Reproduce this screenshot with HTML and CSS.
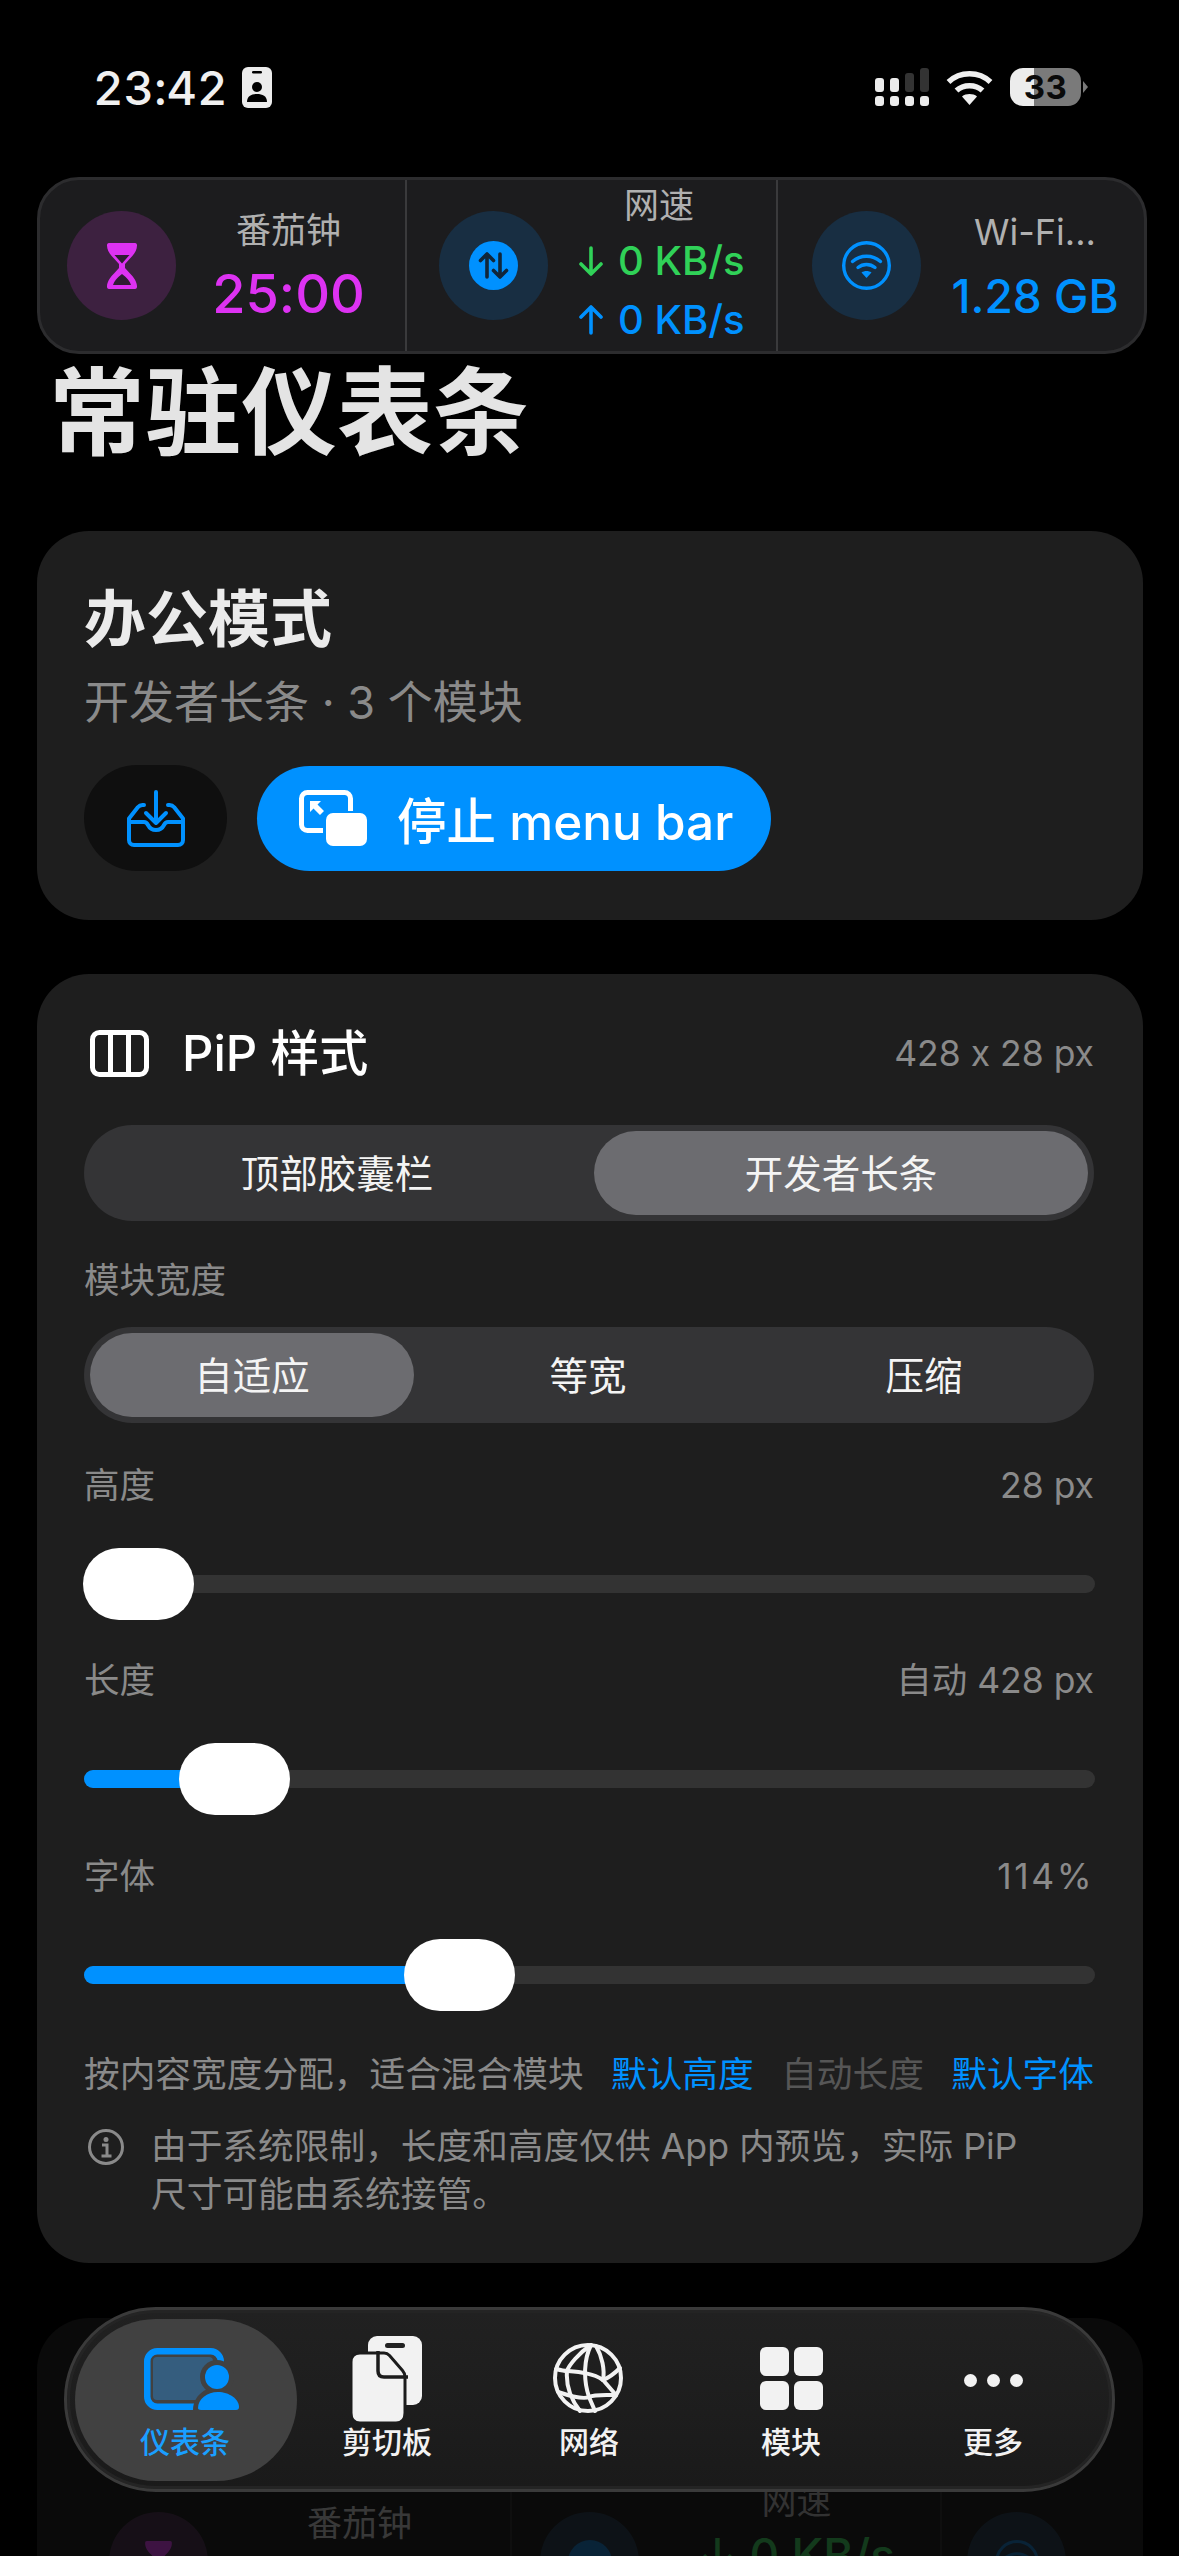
FILE: index.html
```html
<!DOCTYPE html>
<html lang="zh-CN">
<head>
<meta charset="utf-8">
<title>常驻仪表条</title>
<link rel="stylesheet" href="styles.css">
</head>
<body>
<div class="page">
  <header class="status">
    <div class="status-left">
      <span class="clock">23:42</span>
      <svg class="badge" viewBox="0 0 30 41"><rect width="30" height="41" rx="6" fill="#ececec"/><rect x="10" y="4" width="10" height="2.6" rx="1.3" fill="#000"/><circle cx="15" cy="20" r="5" fill="#000"/><path d="M5 35c0-6 4.500-8 10-8s10 2 10 8z" fill="#000"/></svg>
    </div>
    <div class="status-right">
      <svg class="signal" viewBox="0 0 55 38">
        <g fill="#ececec"><rect x="0" y="10" width="9" height="14" rx="3"/><rect x="15" y="10" width="9" height="14" rx="3"/><rect x="0" y="28" width="9" height="10" rx="3"/><rect x="15" y="28" width="9" height="10" rx="3"/><rect x="30" y="28" width="9" height="10" rx="3"/><rect x="45" y="28" width="9" height="10" rx="3"/></g>
        <g fill="#333"><rect x="30" y="5" width="9" height="19" rx="3"/><rect x="45" y="0" width="9" height="24" rx="3"/></g>
      </svg>
      <svg class="wifi" viewBox="0 0 47 36"><g fill="none" stroke="#f0f0f0" stroke-width="5.500"><path d="M2.500 13C14 2 33 2 44.500 13"/><path d="M10.500 21.500C17.500 15 29.500 15 36.500 21.500"/></g><path d="M16 27.500c4-3.200 11-3.200 15 0l-7.500 8.500z" fill="#f0f0f0"/></svg>
      <div class="battery">
        <div class="battery-body"><span class="battery-text">33</span></div>
        <div class="battery-nib"></div>
      </div>
    </div>
  </header>

  <section class="strip">
    <div class="cell cell-a">
      <div class="dot dot-purple">
        <svg class="ico-hourglass" viewBox="0 0 30 46"><path d="M2 0h26c1.500 0 2 1 2 2.500 0 5-3 9-7 13l-5 5.500v4l5 5.500c4 4 7 8.500 7 13 0 1.500-.5 2.500-2 2.500H2c-1.500 0-2-1-2-2.500 0-4.500 3-9 7-13l5-5.500v-4l-5-5.500C3 11.500 0 7.500 0 2.500 0 1 .5 0 2 0z" fill="#dd32f2"/><path d="M7.500 12h15L15 20.500zM6 42c1-4 4-7 9-11 5 4 8 7 9 11z" fill="#2f1b33"/></svg>
      </div>
      <div class="info">
        <div class="info-title">番茄钟</div>
        <div class="info-value purple">25:00</div>
      </div>
    </div>
    <div class="cell cell-b">
      <div class="dot dot-blue">
        <svg class="ico-net" viewBox="0 0 49 49"><circle cx="24.500" cy="24.500" r="24.500" fill="#0091ff"/><g fill="none" stroke="#10263a" stroke-width="3.600" stroke-linecap="round" stroke-linejoin="round"><path d="M18 36V13M11.500 19.500 18 13l6.500 6.500"/><path d="M31 13v23M24.500 29.500 31 36l6.500-6.500"/></g></svg>
      </div>
      <div class="info info-net">
        <div class="info-title">网速</div>
        <div class="rate green"><svg class="arrow" viewBox="0 0 26 30"><path d="M13 2v26M3 18l10 10 10-10" fill="none" stroke="currentColor" stroke-width="3.600" stroke-linecap="round" stroke-linejoin="round"/></svg><span>0 KB/s</span></div>
        <div class="rate blue"><svg class="arrow" viewBox="0 0 26 30"><path d="M13 28V2M3 12 13 2l10 10" fill="none" stroke="currentColor" stroke-width="3.600" stroke-linecap="round" stroke-linejoin="round"/></svg><span>0 KB/s</span></div>
      </div>
    </div>
    <div class="cell cell-c">
      <div class="dot dot-blue">
        <svg class="ico-net" viewBox="0 0 49 49"><circle cx="24.500" cy="24.500" r="22.800" fill="none" stroke="#0091ff" stroke-width="3.400"/><g fill="none" stroke="#0091ff" stroke-width="3.400" stroke-linecap="round"><path d="M10.500 20.500c8-7 20-7 28 0"/><path d="M16 26.500c5-4 12-4 17 0"/></g><path d="M19.500 31.500c3-2 7-2 10 0l-5 5.500z" fill="#0091ff"/></svg>
      </div>
      <div class="info">
        <div class="info-title">Wi-Fi...</div>
        <div class="info-value blue">1.28 GB</div>
      </div>
    </div>
  </section>

  <h1 class="page-title">常驻仪表条</h1>

  <section class="card card-mode">
    <h2 class="mode-title">办公模式</h2>
    <p class="mode-sub">开发者长条 · 3 个模块</p>
    <div class="mode-actions">
      <button class="icon-btn">
        <svg class="ico-inbox" viewBox="0 0 58 57"><g fill="none" stroke="#0091ff" stroke-width="4" stroke-linecap="round" stroke-linejoin="round"><path d="M29 2v31M19 23l10 10 10-10"/><path d="M17 15h-1.500c-2 0-3.500.8-4.700 2.200L2 28.500V50c0 3 2 5 5 5h44c3 0 5-2 5-5V28.500l-8.800-11.300C46 15.800 44.500 15 42.500 15H41"/><path d="M2 32h15c2 0 3 1 4 3 1.500 3 4 5 8 5s6.500-2 8-5c1-2 2-3 4-3h15"/></g></svg>
      </button>
      <button class="stop-btn">
        <svg class="ico-pip" viewBox="0 0 68 56"><rect x="2.500" y="2.500" width="49" height="38" rx="6" fill="none" stroke="#fff" stroke-width="5"/><rect x="24" y="21" width="44" height="35" rx="8" fill="#0091ff"/><rect x="27" y="23" width="41" height="33" rx="7" fill="#fff"/><path d="M11 11h11l-3.500 3.500L25 21l-4 4-6.500-6.500L11 22z" fill="#fff"/></svg>
        <span>停止 menu bar</span>
      </button>
    </div>
  </section>

  <section class="card card-pip">
    <div class="pip-head">
      <div class="pip-head-left">
        <svg class="ico-cols" viewBox="0 0 59 47"><g fill="none" stroke="#fff" stroke-width="5"><rect x="2.500" y="2.500" width="54" height="42" rx="7"/><path d="M20.500 3v41M38.500 3v41"/></g></svg>
        <h3 class="pip-title">PiP 样式</h3>
      </div>
      <span class="muted size-text">428 x 28 px</span>
    </div>

    <div class="segment seg-two">
      <div class="seg-item">顶部胶囊栏</div>
      <div class="seg-item on">开发者长条</div>
    </div>

    <div class="field-label first-label muted">模块宽度</div>
    <div class="segment seg-three">
      <div class="seg-item on">自适应</div>
      <div class="seg-item">等宽</div>
      <div class="seg-item">压缩</div>
    </div>

    <div class="slider-head muted high"><span>高度</span><span>28 px</span></div>
    <div class="track"><div class="fill" style="width:55px"><div class="thumb"></div></div></div>

    <div class="slider-head muted"><span>长度</span><span>自动 428 px</span></div>
    <div class="track"><div class="fill" style="width:151px"><div class="thumb"></div></div></div>

    <div class="slider-head muted"><span>字体</span><span class="pct">114%</span></div>
    <div class="track"><div class="fill" style="width:376px"><div class="thumb"></div></div></div>

    <div class="hints">
      <span class="muted">按内容宽度分配，适合混合模块</span>
      <span class="link">默认高度</span>
      <span class="dim">自动长度</span>
      <span class="link">默认字体</span>
    </div>
    <div class="note muted">
      <svg class="ico-info" viewBox="0 0 38 38"><circle cx="19" cy="19" r="16.500" fill="none" stroke="#8a8a8a" stroke-width="3"/><circle cx="19" cy="11.500" r="2.500" fill="#8a8a8a"/><path d="M15 17h5v11M14.500 28h10" fill="none" stroke="#8a8a8a" stroke-width="3"/></svg>
      <p class="note-text">由于系统限制，长度和高度仅供 App 内预览，实际 PiP<br>尺寸可能由系统接管。</p>
    </div>
  </section>

  <section class="card card-ghost">
    <div class="ghost-row">
      <div class="ghost-cell ghost-a">
        <div class="dot ghost-dot g-purple">
          <svg class="ghost-ico-h" viewBox="0 0 30 46"><path d="M2 0h26c1.500 0 2 1 2 2.500 0 5-3 9-7 13l-5 5.500v4l5 5.500c4 4 7 8.500 7 13 0 1.500-.5 2.500-2 2.500H2c-1.500 0-2-1-2-2.500 0-4.500 3-9 7-13l5-5.500v-4l-5-5.500C3 11.500 0 7.500 0 2.500 0 1 .5 0 2 0z" fill="#dd32f2"/></svg>
        </div>
        <div class="info-title">番茄钟</div>
      </div>
      <div class="ghost-cell ghost-b">
        <div class="dot ghost-dot g-blue">
          <svg class="ghost-ico-n" viewBox="0 0 49 49"><circle cx="24.500" cy="24.500" r="24.500" fill="#0091ff"/></svg>
        </div>
        <div class="info ghost-info">
          <div class="info-title">网速</div>
          <div class="ghost-rate">↓ 0 KB/s</div>
        </div>
      </div>
      <div class="ghost-cell ghost-c">
        <div class="dot ghost-dot g-blue">
          <svg class="ghost-ico-n" viewBox="0 0 49 49"><circle cx="24.500" cy="24.500" r="22.800" fill="none" stroke="#0091ff" stroke-width="3.400"/><path d="M10.500 20.500c8-7 20-7 28 0M16 26.500c5-4 12-4 17 0" fill="none" stroke="#0091ff" stroke-width="3.400"/></svg>
        </div>
      </div>
    </div>
  </section>

  <nav class="tabbar">
    <div class="tab active">
      <div class="tab-pill"></div>
      <svg class="tab-ico" viewBox="0 0 96 62"><rect x="3.250" y="3.250" width="73.500" height="55.500" rx="10" fill="none" stroke="#0091ff" stroke-width="6.500"/><rect x="9" y="9" width="60" height="43" rx="4" fill="#355d7e"/><circle cx="73" cy="29" r="17" fill="#414141"/><path d="M49 62c0-13 11-23 25-23s22 10 22 23z" fill="#414141"/><circle cx="73" cy="29" r="12" fill="#0091ff"/><path d="M54 60c0-9 9-16 20-16s21 7 21 15c0 2-1 3-3 3H57c-2 0-3-1-3-2z" fill="#0091ff"/></svg>
      <span class="tab-label">仪表条</span>
    </div>
    <div class="tab">
      <svg class="tab-ico" viewBox="0 0 72 87"><rect x="17" y="0" width="54" height="69" rx="9" fill="#f2f2f2"/><rect x="34" y="7" width="20" height="5" rx="2.500" fill="#222"/><path d="M9 17h24c2.500 0 4 .8 5.500 2.500l13 15c1.500 1.800 2.500 3.500 2.500 6V77c0 6-3 10-9 10H9c-6 0-9-4-9-10V26c0-6 3-9 9-9z" fill="#f2f2f2" stroke="#1c1c1c" stroke-width="3"/><path d="M27 15v20c0 4 2 6 6 6h24" fill="none" stroke="#1c1c1c" stroke-width="3.500"/></svg>
      <span class="tab-label">剪切板</span>
    </div>
    <div class="tab">
      <svg class="tab-ico" viewBox="0 0 70 70"><g fill="none" stroke="#f2f2f2" stroke-width="4" stroke-linecap="round"><circle cx="35" cy="35" r="33"/><path d="M38 2C26 10 16 22 14 28c-1 12 2 26 13 40"/><path d="M38 2c-7 14-8 34-2 52l6 14"/><path d="M43 3c6 10 9 24 7 34l13 15"/><path d="M3 26c4 1 9 2 11 2 12 1 26 2 36 9"/><path d="M50 37c5-2 12-7 17-12"/><path d="M5 49c9 3 25 8 31 5s18-2 27-2"/></g></svg>
      <span class="tab-label">网络</span>
    </div>
    <div class="tab">
      <div class="tab-grid"><i></i><i></i><i></i><i></i></div>
      <span class="tab-label">模块</span>
    </div>
    <div class="tab">
      <div class="tab-dots"><i></i><i></i><i></i></div>
      <span class="tab-label">更多</span>
    </div>
  </nav>
</div>
</body>
</html>
```

FILE: styles.css
```css
* { box-sizing: border-box; }
html, body { margin: 0; padding: 0; background: #000; }
body { font-family: Inter, "Noto Sans CJK SC", sans-serif; color: #fff; font-feature-settings: "calt" 0; }
h1, h2, h3, p { margin: 0; font: inherit; }
button { border: 0; padding: 0; font: inherit; color: inherit; }
.page { position: relative; width: 1179px; height: 2556px; overflow: hidden; background: #000; }

.status { height: 177px; display: flex; justify-content: space-between; align-items: flex-start; padding: 67px 91px 0 93px; }
.status-left { display: flex; align-items: center; gap: 15px; height: 41px; }
.clock { font-size: 47px; font-weight: 500; line-height: 41px; color: #f0f0f0; font-variant-numeric: tabular-nums; }
.badge { width: 30px; height: 41px; display: block; }
.status-right { display: flex; align-items: center; height: 38px; margin-top: 1px; }
.signal { width: 55px; height: 38px; display: block; margin-right: 16px; }
.wifi { width: 47px; height: 36px; display: block; margin-right: 17px; }
.battery { display: flex; align-items: center; }
.battery-body { width: 71px; height: 38px; border-radius: 13px; background: linear-gradient(90deg, #ececec 24px, #7a7a7a 24px); display: flex; align-items: center; justify-content: center; }
.battery-text { color: #0a0a0a; font-size: 33px; font-weight: 700; line-height: 34px; letter-spacing: .5px; }
.battery-nib { width: 5px; height: 12px; margin-left: 2px; background: #7a7a7a; clip-path: polygon(0 0, 100% 50%, 0 100%); }

.strip { width: 1110px; height: 177px; margin-left: 37px; display: grid; grid-template-columns: 366px 371px 1fr; background: #1c1c1e; border: 3px solid #2c2c2e; border-radius: 42px; overflow: hidden; }
.cell { display: flex; align-items: center; margin-top: -3px; height: 177px; }
.cell + .cell { border-left: 2px solid #3a3a3c; }
.cell-a { padding-left: 27px; }
.cell-b { padding-left: 32px; margin-left: -1px; }
.cell-c { padding-left: 34px; margin-left: -1px; }
.dot { width: 109px; height: 109px; border-radius: 50%; flex: none; display: flex; align-items: center; justify-content: center; }
.dot-purple { background: #3d2140; }
.dot-blue { background: #182e42; }
.ico-hourglass { width: 30px; height: 46px; display: block; }
.ico-net { width: 49px; height: 49px; display: block; }
.info { flex: 1; display: flex; flex-direction: column; align-items: center; gap: 10px; padding-right: 5px; }
.info-title { font-size: 35px; line-height: 46px; color: #b0b0b0; }
.info-value { font-size: 54px; font-weight: 500; line-height: 62px; white-space: nowrap; }
.cell-c .info-title { font-size: 36px; }
.cell-c .info-value { font-size: 46px; line-height: 52px; margin-top: 2px; }
.cell-c .info { padding-right: 0; gap: 13px; padding-left: 5px; }
.purple { color: #dd32f2; }
.blue { color: #0091ff; }
.green { color: #30d158; }
.info-net { gap: 0; padding-right: 0; padding-left: 30px; align-items: flex-start; margin-top: 1px; }
.info-net .info-title { padding-left: 46px; line-height: 44px; margin-bottom: 5px; }
.rate { display: flex; align-items: center; gap: 14px; height: 59px; font-size: 40px; font-weight: 500; white-space: nowrap; line-height: 50px; }
.arrow { width: 26px; height: 30px; display: block; }

.page-title { margin: 6px 0 0 49px; font-size: 96px; line-height: 104px; font-weight: 700; color: #e4e4e4; }

.card { width: 1106px; margin-left: 37px; background: #1e1e1e; border-radius: 52px; }
.card-mode { height: 389px; margin-top: 67px; padding: 53px 47px 0; }
.mode-title { font-size: 62px; line-height: 72px; font-weight: 700; color: #ebebeb; }
.mode-sub { font-size: 45px; line-height: 58px; color: #8a8a8a; margin-top: 18px; }
.mode-actions { display: flex; align-items: center; gap: 30px; margin-top: 33px; }
.icon-btn { width: 143px; height: 106px; border-radius: 53px; background: #0f0f0f; display: flex; align-items: center; justify-content: center; }
.ico-inbox { width: 58px; height: 57px; display: block; }
.stop-btn { height: 105px; width: 514px; border-radius: 53px; background: #0091ff; display: flex; align-items: center; gap: 30px; padding-left: 42px; font-size: 49.500px; font-weight: 500; color: #fff; white-space: nowrap; }
.ico-pip { width: 68px; height: 56px; display: block; }

.card-pip { height: 1289px; margin-top: 54px; padding: 56px 47px 0; }
.pip-head { display: flex; justify-content: space-between; align-items: center; height: 47px; padding: 0 2px 0 6px; }
.pip-head-left { display: flex; align-items: center; gap: 33px; }
.ico-cols { width: 59px; height: 47px; display: block; }
.pip-title { font-size: 49px; font-weight: 500; line-height: 47px; color: #fff; }
.muted { color: #8a8a8a; }
.size-text { font-size: 35.500px; line-height: 47px; }
.segment { width: 1010px; height: 96px; padding: 6px; border-radius: 48px; background: #343436; display: grid; }
.seg-two { grid-template-columns: 494px 494px; column-gap: 10px; margin-top: 48px; }
.seg-three { grid-template-columns: repeat(3, 324px); column-gap: 12px; }
.seg-item { display: flex; align-items: center; justify-content: center; padding-bottom: 4px; border-radius: 42px; font-size: 38.500px; color: #f4f4f4; }
.seg-item.on { background: #6c6c70; }
.field-label { font-size: 35.500px; line-height: 48px; }
.first-label { margin-top: 36px; margin-bottom: 22px; }
.slider-head { display: flex; justify-content: space-between; padding-right: 2px; font-size: 35.500px; line-height: 48px; margin-top: 64.500px; }
.slider-head.high { margin-top: 38.500px; }
.pct { letter-spacing: 2.500px; }
.track { position: relative; width: 1011px; height: 18px; margin-top: 65px; border-radius: 9px; background: #333; }
.fill { position: relative; height: 18px; border-radius: 9px; background: #0091ff; }
.thumb { position: absolute; right: -55px; top: -27px; width: 111px; height: 72px; border-radius: 36px; background: #fff; }

.hints { display: flex; justify-content: space-between; margin-top: 66px; padding-right: 2px; font-size: 35.700px; line-height: 48px; white-space: nowrap; }
.link { color: #0091ff; }
.dim { color: #565656; }
.note { display: flex; gap: 26px; margin-top: 24px; padding-left: 3px; font-size: 35.700px; line-height: 48px; }
.ico-info { width: 38px; height: 38px; display: block; flex: none; margin-top: 6px; }
.note-text { white-space: nowrap; }

.card-ghost { height: 400px; margin-top: 55px; background: #0a0a0a; }
.ghost-row { display: grid; grid-template-columns: 473px 430px 1fr; height: 400px; opacity: .24; }
.ghost-cell { position: relative; display: flex; height: 400px; }
.ghost-cell + .ghost-cell { border-left: 2px solid #222; }
.ghost-dot { margin-top: 194px; width: 99px; height: 99px; }
.g-purple { background: #3d2140; }
.g-blue { background: #182e42; }
.ghost-ico-h { width: 27px; height: 41px; display: block; }
.ghost-ico-n { width: 44px; height: 44px; display: block; opacity: .7; }
.ghost-a { padding-left: 72px; }
.ghost-a .info-title { margin: 182px 0 0 99px; color: #c8c8c8; font-size: 35px; }
.ghost-b { padding-left: 28px; }
.ghost-info { margin-top: 160px; align-items: center; gap: 6px; padding: 0 0 0 14px; }
.ghost-rate { font-size: 46px; font-weight: 500; line-height: 50px; color: #30d158; white-space: nowrap; }
.ghost-c { padding-left: 25px; }

.tabbar { position: absolute; left: 64px; top: 2307px; width: 1051px; height: 185px; padding-left: 17px; display: grid; grid-template-columns: repeat(5, 202px); border-radius: 92px; background: linear-gradient(#212121, #1a1a1a); border: 3px solid #3a3a3a; box-shadow: inset 0 0 0 3px #242424; }
.tab { position: relative; display: flex; flex-direction: column; align-items: center; padding-top: 28px; }
.tab-pill { position: absolute; left: -9px; top: 9px; width: 222px; height: 162px; border-radius: 81px; background: #414141; }
.tab-ico { position: relative; height: 68px; display: block; }
.tab-label { position: absolute; top: 112px; left: 0; right: 0; text-align: center; font-size: 30px; line-height: 40px; font-weight: 500; color: #f2f2f2; }
.active .tab-label { color: #1a9fff; }
.active .tab-ico { width: 96px; height: 62px; margin: 10px 0 0 14px; }
.tab:nth-child(2) .tab-ico { width: 72px; height: 87px; margin-top: -2px; }
.tab:nth-child(3) .tab-ico { width: 70px; height: 70px; margin: 5px 0 0 -2px; }
.tab-grid { display: grid; grid-template-columns: 29px 29px; grid-auto-rows: 29px; gap: 5px; margin-top: 9px; }
.tab-grid i { background: #f2f2f2; border-radius: 6px; }
.tab-dots { display: flex; gap: 10px; margin-top: 36px; }
.tab-dots i { width: 13px; height: 13px; border-radius: 50%; background: #f2f2f2; }
```
